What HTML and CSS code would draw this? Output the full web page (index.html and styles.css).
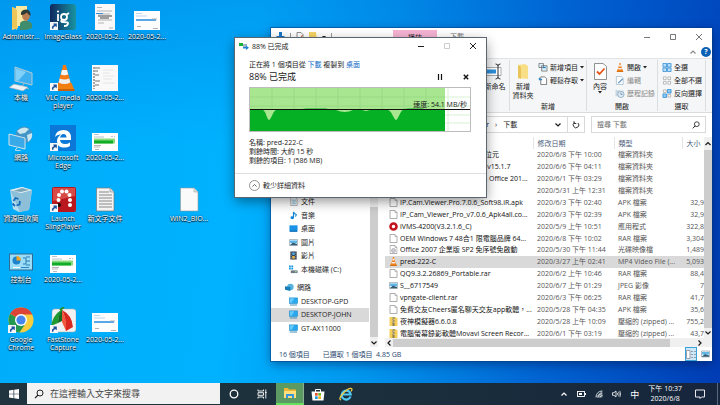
FILE: index.html
```html
<!DOCTYPE html>
<html lang="zh-Hant">
<head>
<meta charset="utf-8">
<title>桌面</title>
<link rel="stylesheet" href="styles.css">
</head>
<body>
<svg class="defs" aria-hidden="true">
  <symbol id="shortcut" viewBox="0 0 8 8"><rect width="8" height="8" fill="#f4f6f8"/><path d="M2 6.8C1.6 4.6 2.6 3.4 4 3.3L3.2 1.6H6.8V5.2L5.6 4.2C4 4.2 3.2 5 3.4 6.8Z" fill="#1c4f9c"/></symbol>
  <symbol id="cone" viewBox="0 0 20 26"><path d="M3 18H17L20 25H0Z" fill="#f08010"/><path d="M0 24H20V26H0Z" fill="#c9600c"/><path d="M8.6 0H11.4L16.5 19Q10 23 3.5 19Z" fill="#f47b16"/><path d="M7.5 5H12.5L13.7 9.5Q10 11 6.300 9.500Z" fill="#f5f5f5"/><path d="M5.200 13.500Q10 15.500 14.800 13.500L15.800 17.500Q10 20.500 4.200 17.500Z" fill="#eee"/></symbol>
  <symbol id="file" viewBox="0 0 8 9"><path d="M.5.5H5.500L7.500 2.500V8.500H.5Z" fill="#fff" stroke="#999" stroke-width=".8"/><path d="M5.500.5V2.500H7.500" fill="none" stroke="#999" stroke-width=".6"/></symbol>
  <symbol id="zip" viewBox="0 0 8 9"><path d="M0 0H5L8 1V9H0Z" fill="#f3cf5a"/><path d="M3 0H5V9H3Z" fill="#8a7b4c"/><path d="M3 1H4M4 2.500H5M3 4H4M4 5.500H5" stroke="#fff" stroke-width=".8"/></symbol>
  <symbol id="photo" viewBox="0 0 9 8"><path d="M.5 1H8.500V7H.5Z" fill="#eaf5fc" stroke="#8a969e" stroke-width=".6"/><path d="M1 2H8V4.500H1Z" fill="#5db8e8"/><path d="M1 6.500L4 4L8 5.500V6.700H1Z" fill="#355d76"/></symbol>
  <symbol id="monitor" viewBox="0 0 10 9"><rect x=".5" y=".5" width="9" height="6.200" fill="#28a8ee" stroke="#1684c4" stroke-width=".6"/><path d="M1 1H6L3 6H1Z" fill="#65c9fa"/><path d="M1 8.400H9" stroke="#3682ab"/></symbol>
  <symbol id="close" viewBox="0 0 8 8"><path d="M1 1L7 7M7 1L1 7" stroke="currentColor" fill="none"/></symbol>
  <symbol id="min" viewBox="0 0 8 8"><path d="M1 4.500H7" stroke="currentColor"/></symbol>
  <symbol id="max" viewBox="0 0 8 8"><path d="M1.500 1.500H6.500V6.500H1.500Z" stroke="currentColor" fill="none"/></symbol>
  <symbol id="up" viewBox="0 0 8 8"><path d="M1.500 5.500L4 3L6.500 5.500" stroke="currentColor" stroke-width="1.200" fill="none"/></symbol>
  <symbol id="down" viewBox="0 0 8 8"><path d="M1.500 2.500L4 5L6.500 2.500" stroke="currentColor" stroke-width="1.200" fill="none"/></symbol>
  <symbol id="left" viewBox="0 0 8 8"><path d="M5.500 1.500L3 4L5.500 6.500" stroke="currentColor" stroke-width="1.200" fill="none"/></symbol>
  <symbol id="right" viewBox="0 0 8 8"><path d="M2.500 1.500L5 4L2.500 6.500" stroke="currentColor" stroke-width="1.200" fill="none"/></symbol>
  <symbol id="caret" viewBox="0 0 4 4"><path d="M0 1H4L2 3.400Z" fill="#222"/></symbol>
  <symbol id="lens" viewBox="0 0 10 10"><circle cx="6" cy="4" r="3" stroke="currentColor" fill="none"/><path d="M4 6L1 9.200" stroke="currentColor" stroke-width="1.200"/></symbol>
  <symbol id="shotgreen" viewBox="0 0 26 18"><rect width="26" height="18" fill="#fff"/><path d="M2 1.500H7M2 4H12M19 3.500H21M22 3.500H23" stroke="#9ab" stroke-width=".7"/><rect x="2" y="5.500" width="21" height="5" fill="#8bdc80"/><path d="M2 7.500H21V10.500H2Z" fill="#12ad28"/><path d="M2 12.500H9M2 14H8M3 16.500H7" stroke="#888" stroke-width=".6"/></symbol>
  <symbol id="shotblue" viewBox="0 0 26 19"><rect width="26" height="19" fill="#fdfdfd"/><path d="M2 2.500H8M2 5H13" stroke="#9cc4e8" stroke-width=".7"/><rect x="2" y="8" width="20" height="2" fill="#5aa7e8"/><path d="M18 8H23M3 15.500H7M19 17.500H24" stroke="#aaa" stroke-width=".9"/></symbol>
</svg>

<main class="desktop">
  <div class="icons">
    <a class="item" href="#"><svg viewBox="0 0 26 26"><path d="M4 3L10 5V24L4 26Z" fill="#f7d774"/><path d="M8 2H19V22H8Z" fill="#fbe8a0"/><path d="M4 3L9 6V26L4 23Z" fill="#edc65a"/><path d="M12 26V20Q12 17 17 16.500Q23 17 24 20V24Q18 27 12 26Z" fill="#3f8d6c"/><path d="M14 10Q14 6 18 6Q22 6 22 10.500Q22 16 18 17Q14 16 14 10Z" fill="#bb7d52"/><path d="M13 11Q12 6 18 5.500Q23 6 22.500 12Q20 10 19 8.500Q16 11 13 11Z" fill="#2e3a35"/></svg><span>Administr...</span></a>
    <a class="item" href="#"><svg viewBox="0 0 26 26"><defs><linearGradient id="ig" x2="1"><stop stop-color="#10285e"/><stop offset="1" stop-color="#1894a2"/></linearGradient></defs><rect width="26" height="26" rx="3" fill="url(#ig)"/><g stroke="#fff" fill="none" stroke-width="1.800"><path d="M8 10V17"/><circle cx="14" cy="13" r="3"/><path d="M16 11L19 9M12 16Q10 18 13 18Q18 18 18 19Q18 22 14 22"/></g><circle cx="8" cy="7.500" r="1.100" fill="#fff"/><use href="#shortcut" y="18" width="8" height="8"/></svg><span>ImageGlass</span></a>
    <a class="item" href="#"><svg viewBox="0 0 26 26"><rect x="3" width="20" height="26" fill="#f8f8f8"/><path d="M5 3.500H10M5 7H20M6 10H18M6 16H20M6 19H12M17 24H21" stroke="#999" stroke-width=".7"/><path d="M4 9.500H11" stroke="#3b8fd8"/><path d="M6 12H20M8 14H17" stroke="#444"/></svg><span>2020-05-2...</span></a>
    <a class="item" href="#"><svg viewBox="0 0 26 26"><use href="#shotblue" y="7" width="26" height="19"/></svg><span>2020-05-2...</span></a>

    <a class="item first" href="#"><svg viewBox="0 0 26 26"><path d="M7 2L24 8V20L7 16Z" fill="#3fb0ef" stroke="#b6cbd6"/><path d="M8 3.500L18 7L10 16L8 15.500Z" fill="#80d0f8"/><path d="M16 18L14 22L21 24" fill="none" stroke="#aab8c0"/><path d="M6 19L20 22L15 26L1 22.500Z" fill="#edf2f5" stroke="#93a4ad" stroke-width=".6"/></svg><span>本機</span></a>
    <a class="item" href="#"><svg viewBox="0 0 26 26"><use href="#cone" x="4" width="21" height="26"/><use href="#shortcut" y="18" width="8" height="8"/></svg><span>VLC media player</span></a>
    <a class="item" href="#"><svg viewBox="0 0 26 26"><rect y="0" width="26" height="26" fill="#f9f9f9"/><path d="M2 2V24" stroke="#555" stroke-dasharray="2 1"/><path d="M3 3H8M3 6H6M3 10H7M3 16H8M3 20H7" stroke="#777"/><path d="M11 5H21M11 8H18M11 11H22M11 14H20M11 18H23" stroke="#ddd" stroke-width=".7"/></svg><span>2020-05-2...</span></a>

    <a class="item first" href="#"><svg viewBox="0 0 26 26"><circle cx="16" cy="10" r="8.500" fill="#4195c7"/><path d="M9 6Q15 0 21 4L17 8L12 9ZM19 10L24 8Q25 14 20 17Z" fill="#cae6ef"/><path d="M1 9L17 13V24L1 20Z" fill="#39a9e8" stroke="#d5e2e8"/><path d="M9 23L7 25L13 26" stroke="#d3dde2" fill="none"/></svg><span>網路</span></a>
    <a class="item" href="#"><svg viewBox="0 0 26 26"><rect width="26" height="26" fill="#0b78d7"/><path d="M5 12Q6 5 13.500 5Q21 5 21 13V15H10Q10.500 19 15 19Q18 19 20 17.500V21Q17 23 13 22.500Q7 22 7 16Q7 12 11 9.500Q7 9 5 12ZM10 12.500H16.500Q16.500 9 13.500 9Q10.800 9 10 12.500Z" fill="#fff" fill-rule="evenodd"/><use href="#shortcut" y="18" width="8" height="8"/></svg><span>Microsoft Edge</span></a>
    <a class="item" href="#"><svg viewBox="0 0 26 26"><use href="#shotgreen" y="8" width="26" height="18"/></svg><span>2020-05-2...</span></a>

    <a class="item first" href="#"><svg viewBox="0 0 26 26"><path d="M2 4L14 1L24 4L21 24L11 26L5 23Z" fill="#b5dced"/><path d="M2 4L13 7L24 4L21 24L12 26Z" fill="#8dc0d8"/><path d="M2 4L14 1L24 4L13 7Z" fill="#e1eef3"/><path d="M5 5L14 2L21 4L13 6Z" fill="#7ba6b9"/><path d="M5.500 15L7.500 12L10.500 13M12 15L11.500 18.500L8.500 19.500M7 20L4.500 17.500" stroke="#146bb9" stroke-width="1.800" fill="none"/></svg><span>資源回收筒</span></a>
    <a class="item" href="#"><svg viewBox="0 0 26 26"><rect x="2" y="1" width="24" height="25" rx="2" fill="#b9181f"/><path d="M3 2H25V10L3 15Z" fill="#d84a45"/><g fill="#fff"><circle cx="12" cy="5.500" r="2"/><circle cx="16.500" cy="5.500" r="2"/><circle cx="9" cy="9" r="2"/><circle cx="19.500" cy="9" r="2"/><circle cx="8.500" cy="14" r="2"/><circle cx="20" cy="14" r="2"/><circle cx="20" cy="19" r="2"/></g><circle cx="9" cy="19" r="2" fill="#220b0b"/><use href="#shortcut" y="18" width="8" height="8"/></svg><span>Launch SlingPlayer</span></a>
    <a class="item" href="#"><svg viewBox="0 0 26 26"><path d="M4.500 2H18L22 6V25H4.500Z" fill="#f3f3f3" stroke="#777" stroke-width=".7"/><path d="M18 2V6H22" fill="#ddd" stroke="#777" stroke-width=".5"/><path d="M7 6H17M7 9H20M7 12H20M7 15H20M7 18H20M7 21H20" stroke="#888"/></svg><span>新文字文件</span></a>
    <a class="item col5" href="#"><svg viewBox="0 0 26 26"><path d="M4.500 2H18L22 6V25H4.500Z" fill="#fafafa" stroke="#999" stroke-width=".6"/><path d="M18 2V6H22" fill="#ddd" stroke="#999" stroke-width=".5"/></svg><span>WIN2_BIO...</span></a>

    <a class="item first" href="#"><svg viewBox="0 0 26 26"><rect x="1.500" y="7" width="23" height="16" fill="#9bdcf8" stroke="#326b92"/><circle cx="8.500" cy="13.500" r="4" fill="#1d83cc"/><path d="M8.500 13.500V9A4.500 4.500 0 0 1 13 13.500Z" fill="#f6a623"/><path d="M15 11H18V17H15M18 10H22M18 14H22M18 18H22" stroke="#267db5" fill="none"/><path d="M5 20.500H12" stroke="#fff"/><path d="M13 20.500H21" stroke="#2c86bf"/></svg><span>控制台</span></a>
    <a class="item" href="#"><svg viewBox="0 0 26 26"><use href="#shotgreen" y="8" width="26" height="18"/></svg><span>2020-05-2...</span></a>

    <a class="item first" href="#"><svg viewBox="0 0 26 26"><circle cx="13" cy="13" r="12.500" fill="#f9ce3e"/><path d="M13 13L2.200 6.800A12.500 12.500 0 0 0 11.500 25.400L18 16Z" fill="#24994f"/><path d="M13 13L2.200 6.800A12.500 12.500 0 0 1 24.300 7.500H13Z" fill="#dc4437"/><circle cx="13" cy="13" r="6" fill="#fff"/><circle cx="13" cy="13" r="4.600" fill="#4787ed"/><use href="#shortcut" y="18" width="8" height="8"/></svg><span>Google Chrome</span></a>
    <a class="item" href="#"><svg viewBox="0 0 26 26"><rect x="2" y="2" width="24" height="23" rx="3" fill="#f2f2f2" stroke="#aaa" stroke-width=".5"/><path d="M11 3Q3 8 1 19L8 16Q8 8 13 3Z" fill="#1f9b32"/><path d="M8 16Q8 8 12 3L12 14Z" fill="#146a22"/><path d="M12 3Q22 8 23 20L16 24Q16 10 12 3Z" fill="#d8281f"/><path d="M12 3Q17 12 16 24L12 15Z" fill="#f0593e"/><path d="M10 3L14 0" stroke="#1b8f2d" stroke-width="2"/><use href="#shortcut" y="18" width="8" height="8"/></svg><span>FastStone Capture</span></a>
    <a class="item" href="#"><svg viewBox="0 0 26 26"><use href="#shotblue" y="6" width="26" height="19"/></svg><span>2020-05-2...</span></a>
  </div>

  <section class="explorer" aria-label="下載">
    <header class="ex-title">
      <div class="quick">
        <svg width="9" height="10" viewBox="0 0 9 10"><path d="M3 0H6V4H9L4.500 9L0 4H3Z" fill="#1976c8"/></svg><i></i>
        <svg width="8" height="9" viewBox="0 0 8 9"><path d="M1 .5H5L7 2.500V8.500H1Z" fill="#fff" stroke="#777" stroke-width=".8"/><path d="M2.500 5L4 6.500L6.500 3" fill="none" stroke="#d85a25"/></svg>
        <svg width="8" height="9" viewBox="0 0 8 9"><path d="M0 0H7L8 9H0Z" fill="#f5d468"/></svg>
        <svg width="4" height="4"><use href="#caret"/></svg><i></i>
      </div>
      <span class="context-tab">播放</span>
      <span class="ex-name">下載</span>
      <div class="winbtns light">
        <button aria-label="最小化"><svg><use href="#min"/></svg></button>
        <button aria-label="最大化"><svg><use href="#max"/></svg></button>
        <button aria-label="關閉"><svg><use href="#close"/></svg></button>
      </div>
    </header>
    <div class="tabs"><svg class="s8 gray"><use href="#up"/></svg><span class="help">?</span></div>
    <div class="ribbon">
      <div class="group rename">
        <button class="big"><svg width="16" height="17" viewBox="0 0 16 17"><path d="M0 4.500H14V12.500H0" fill="#fff" stroke="#999" stroke-width=".8"/><rect y="6.500" width="9" height="4" fill="#2e91dc"/><path d="M8.500 1Q11 1 11 3V14Q11 16 8.500 16M13.500 1Q11 1 11 3M11 14Q11 16 13.500 16" fill="none" stroke="#333"/></svg><span>新命名</span></button>
        <span class="gname"></span>
      </div>
      <div class="group new">
        <div class="tools">
          <button class="big"><svg width="12" height="17" viewBox="0 0 12 17"><path d="M1 2L8 1L11 3V16L1 15Z" fill="#f8df87"/><path d="M1 2L4 4V16L1 15Z" fill="#e9c45a"/></svg><span>新增<br>資料夾</span></button>
          <div class="stack">
            <button><svg class="ic" viewBox="0 0 10 10"><path d="M.5.5H5.500V5H.5ZM3.500 3H9.500V9H3.500Z" fill="#dceef8" stroke="#555" stroke-width=".7"/><path d="M5 5H8" stroke="#2583c8" stroke-width="1.500"/></svg>新增項目<svg class="car"><use href="#caret"/></svg></button>
            <button><svg class="ic" viewBox="0 0 10 10"><path d="M2.500 1H7L9 3V9.500H2.500Z" fill="#fff" stroke="#555" stroke-width=".8"/><path d="M4 4H1V2" fill="none" stroke="#2583c8" stroke-width="1.300"/></svg>輕鬆存取<svg class="car"><use href="#caret"/></svg></button>
          </div>
        </div>
        <span class="gname">新增</span>
      </div>
      <div class="group open">
        <div class="tools">
          <button class="big"><svg width="13" height="17" viewBox="0 0 13 17"><path d="M.5.5H9L12.500 3.500V16.500H.5Z" fill="#fff" stroke="#777" stroke-width=".8"/><path d="M3 8.500L5.500 11L10.500 5.500" fill="none" stroke="#e85314" stroke-width="1.800"/></svg><span>內容</span><svg class="car"><use href="#caret"/></svg></button>
          <div class="stack">
            <button><svg class="ic" viewBox="0 0 20 26"><use href="#cone" width="20" height="26"/></svg>開啟<svg class="car"><use href="#caret"/></svg></button>
            <button disabled><svg class="ic" viewBox="0 0 10 10"><path d="M1 .5H6.500L8.500 2.500V9.500H1Z" fill="#fff" stroke="#9ab5cc" stroke-width=".8"/><path d="M3 8L8 3" stroke="#6d9fca" stroke-width="1.400"/></svg>編輯</button>
            <button disabled><svg class="ic" viewBox="0 0 10 10"><path d="M0 1H4L5 2H9V8H0Z" fill="#c7d6e2"/><circle cx="6" cy="6" r="3.500" fill="#dfebf4" stroke="#7f9fba" stroke-width=".8"/><path d="M6 4V6H8" stroke="#587fa0" fill="none" stroke-width=".8"/></svg>歷程記錄</button>
          </div>
        </div>
        <span class="gname">開啟</span>
      </div>
      <div class="group select">
        <div class="tools">
          <div class="stack">
            <button><svg class="ic" viewBox="0 0 10 10"><path d="M.5.5H4.500V4.500H.5ZM5.500.5H9.500V4.500H5.500ZM.5 5.500H4.500V9.500H.5ZM5.500 5.500H9.500V9.500H5.500Z" fill="#b9defa" stroke="#2186d2" stroke-width=".8"/></svg>全選</button>
            <button><svg class="ic" viewBox="0 0 10 10"><path d="M1 1H4V4H1ZM6 1H9V4H6ZM1 6H4V9H1ZM6 6H9V9H6Z" fill="#fff" stroke="#999" stroke-width=".7"/></svg>全部不選</button>
            <button><svg class="ic" viewBox="0 0 10 10"><path d="M1 1H4V4H1ZM6 6H9V9H6Z" fill="#fff" stroke="#999" stroke-width=".7"/><path d="M5.500.5H9.500V4.500H5.500ZM.5 5.500H4.500V9.500H.5Z" fill="#8ac8f5" stroke="#2186d2" stroke-width=".8"/></svg>反向選擇</button>
          </div>
        </div>
        <span class="gname">選取</span>
      </div>
    </div>
    <div class="addr">
      <div class="crumbs"><span class="path">or<b>›</b>下載</span><svg class="s8"><use href="#down"/></svg><button aria-label="重新整理"><svg width="8" height="8" viewBox="0 0 8 8"><path d="M6 2A2.800 2.800 0 1 1 2.500 1.600M2 .2V2.500H4.300" fill="none" stroke="#333"/></svg></button></div>
      <label class="find"><input type="search" placeholder="搜尋 下載" aria-label="搜尋 下載"><svg width="8" height="8"><use href="#lens"/></svg></label>
    </div>
    <div class="panes">
      <nav class="tree">
        <div class="branches">
          <div class="branch pc">
            <a href="#"><svg viewBox="0 0 10 9"><path d="M2 0H7L9 2V9H2Z" fill="#fff" stroke="#888" stroke-width=".7"/><path d="M3.500 3H7.500M3.500 5H7.500M3.500 7H7.500" stroke="#4c9dcc" stroke-width=".8"/></svg>文件</a>
            <a href="#"><svg viewBox="0 0 10 9"><path d="M5 7V.5Q6 2.500 8 3.500Q8 5 7 5.500" fill="none" stroke="#1383d4" stroke-width="1.300"/><ellipse cx="3.600" cy="7" rx="2" ry="1.600" fill="#1383d4"/></svg>音樂</a>
            <a href="#"><svg viewBox="0 0 10 9"><rect x=".5" y="1" width="9" height="7" fill="#1891e6"/><path d="M1 7.500H9" stroke="#0a5a9c"/></svg>桌面</a>
            <a href="#"><svg viewBox="0 0 9 8"><use href="#photo"/></svg>圖片</a>
            <a href="#"><svg viewBox="0 0 10 9"><rect x="1.500" width="7" height="9" fill="#2c3948"/><path d="M3.500 1H6.500V4H3.500Z" fill="#4aa3e2"/><path d="M3.500 5H6.500V8H3.500Z" fill="#e7b34a"/><path d="M2.400 0V9M7.600 0V9" stroke="#d5dbe0" stroke-width=".7" stroke-dasharray="1"/></svg>影片</a>
            <a href="#"><svg viewBox="0 0 10 9"><path d="M0 0H2V2H0ZM2.600 0H4.600V2H2.600ZM0 2.600H2V4.600H0ZM2.600 2.600H4.600V4.600H2.600Z" fill="#1698e0"/><path d="M2 5.500H9.500V8.500H2Z" fill="#6c7780"/><path d="M6.500 7H8.500" stroke="#aef5a0"/></svg>本機磁碟 (C:)</a>
          </div>
          <div class="branch net">
            <a class="root" href="#"><svg viewBox="0 0 10 9"><circle cx="6" cy="4" r="3.600" fill="#58b4df"/><path d="M0 3L6 4V8.500L0 7Z" fill="#1a7db7"/></svg>網路</a>
            <a href="#"><svg><use href="#monitor"/></svg>DESKTOP-GPD</a>
            <a class="on" href="#"><svg><use href="#monitor"/></svg>DESKTOP-JOHN</a>
            <a href="#"><svg><use href="#monitor"/></svg>GT-AX11000</a>
          </div>
        </div>
        <div class="vbar"><i></i><svg class="s8"><use href="#down"/></svg></div>
      </nav>
      <div class="list">
        <div class="rows">
          <table>
            <thead><tr><th class="n"></th><th class="d">修改日期</th><th class="t">類型</th><th class="z">大小</th></tr></thead>
            <tbody>
              <tr><td class="peek">位元</td><td>2020/6/8 下午 10:00</td><td>檔案資料夾</td><td></td></tr>
              <tr><td class="peek">-v15.1.7</td><td>2020/6/6 下午 04:11</td><td>檔案資料夾</td><td></td></tr>
              <tr><td class="peek">- Office 201...</td><td>2020/6/1 下午 03:29</td><td>檔案資料夾</td><td></td></tr>
              <tr><td></td><td>2020/5/31 上午 12:31</td><td>檔案資料夾</td><td></td></tr>
              <tr><td><svg><use href="#file"/></svg>IP.Cam.Viewer.Pro.7.0.6_Soft98.iR.apk</td><td>2020/6/3 下午 02:40</td><td>APK 檔案</td><td>32,9</td></tr>
              <tr><td><svg><use href="#file"/></svg>IP_Cam_Viewer_Pro_v7.0.6_Apk4all.co...</td><td>2020/6/3 下午 02:39</td><td>APK 檔案</td><td>32,9</td></tr>
              <tr><td><svg viewBox="0 0 9 9"><circle cx="4.500" cy="4.500" r="3" fill="#fff" stroke="#c3141e" stroke-width="2.600"/></svg>iVMS-4200(V3.2.1.6_C)</td><td>2020/5/9 上午 10:51</td><td>應用程式</td><td>322,8</td></tr>
              <tr><td><svg><use href="#file"/></svg>OEM Windows 7 48合1 限電腦品牌 64...</td><td>2020/6/8 下午 10:02</td><td>RAR 檔案</td><td>3,304</td></tr>
              <tr><td><svg viewBox="0 0 8 9"><use href="#file"/><circle cx="4" cy="5.500" r="2" fill="#ccd" stroke="#999" stroke-width=".6"/></svg>Office 2007 企業版 SP2 免序號免啟動</td><td>2020/5/30 下午 11:44</td><td>光碟映像檔</td><td>1,489</td></tr>
              <tr class="on"><td><svg viewBox="0 0 20 26"><use href="#cone" width="20" height="26"/></svg>pred-222-C</td><td>2020/3/27 上午 02:41</td><td>MP4 Video File (...</td><td>5,093</td></tr>
              <tr><td><svg><use href="#file"/></svg>QQ9.3.2.26869_Portable.rar</td><td>2020/6/2 上午 10:46</td><td>RAR 檔案</td><td>88,4</td></tr>
              <tr><td><svg><use href="#photo"/></svg>S__6717549</td><td>2020/6/7 上午 01:29</td><td>JPEG 影像</td><td>7</td></tr>
              <tr><td><svg><use href="#file"/></svg>vpngate-client.rar</td><td>2020/6/3 下午 06:25</td><td>RAR 檔案</td><td>41,7</td></tr>
              <tr><td><svg><use href="#file"/></svg>免費交友Cheers匿名聊天交友app軟體，...</td><td>2020/5/28 下午 04:35</td><td>APK 檔案</td><td>35,6</td></tr>
              <tr><td><svg><use href="#zip"/></svg>夜神模擬器6.6.0.8</td><td>2020/5/28 上午 10:09</td><td>壓縮的 (zipped) ...</td><td>755,2</td></tr>
              <tr><td><svg><use href="#zip"/></svg>電腦螢幕錄影軟體Movavi Screen Recor...</td><td>2020/6/1 下午 03:19</td><td>壓縮的 (zipped) ...</td><td>43,7</td></tr>
            </tbody>
          </table>
          <div class="vbar files"><svg class="s8"><use href="#up"/></svg><i></i><svg class="s8"><use href="#down"/></svg></div>
        </div>
        <div class="hbar"><svg class="s8"><use href="#left"/></svg><i></i><svg class="s8"><use href="#right"/></svg></div>
      </div>
    </div>
    <footer class="status"><span>16 個項目</span><span>已選取 1 個項目&nbsp; 4.85 GB</span>
      <div class="views"><button class="on" aria-label="詳細資料"><svg width="10" height="9" viewBox="0 0 10 9"><path d="M.5.5H4V8.500H.5ZM5 1.500H7M5 4.500H7M5 7.500H7M8 1.500H10M8 4.500H10M8 7.500H10" fill="#fff" stroke="#889" stroke-width=".8"/></svg></button><button aria-label="縮圖"><svg width="9" height="8"><use href="#photo"/></svg></button></div>
    </footer>
  </section>

  <section class="dialog" aria-label="88% 已完成">
    <header class="dl-title"><svg width="10" height="8" viewBox="0 0 10 8"><path d="M0 1H4V4H0Z" fill="#18b13a"/><path d="M4 2H8V6H4Z" fill="#9cb5c7"/><path d="M4 5H7V3.500L10 5.800L7 8V6.600H4Z" fill="#1c82d6"/></svg><span>88% 已完成</span>
      <div class="winbtns">
        <button aria-label="最小化"><svg><use href="#min"/></svg></button>
        <button aria-label="最大化" disabled><svg><use href="#max"/></svg></button>
        <button aria-label="關閉"><svg><use href="#close"/></svg></button>
      </div>
    </header>
    <div class="dl-body">
      <p>正在將 1 個項目從 <a href="#">下載</a> 複製到 <a href="#">桌面</a></p>
      <div class="headline"><strong>88% 已完成</strong>
        <button aria-label="暫停"><svg width="6" height="6" viewBox="0 0 6 6"><path d="M1.500 0V6M4.500 0V6" stroke="#111" stroke-width="1.200"/></svg></button>
        <button aria-label="取消"><svg width="6" height="6" viewBox="0 0 6 6"><path d="M.8.8L5.200 5.200M5.200.8L.8 5.200" stroke="#111" stroke-width="1.400"/></svg></button>
      </div>
      <div class="chart">
        <svg viewBox="0 0 220 43" preserveAspectRatio="none">
          <path d="M22 0V43M44 0V43M66 0V43M88 0V43M110 0V43M132 0V43M154 0V43M176 0V43M198 0V43M0 9H220M0 18H220M0 27H220M0 35H220" stroke="#d8f3d1" stroke-width="1"/>
          <rect width="195" height="43" fill="#a8e690"/>
          <path d="M22 0V22M44 0V22M66 0V22M88 0V22M110 0V22M132 0V22M154 0V22M176 0V22M0 9H195M0 18H195" stroke="#98da84" stroke-width="1"/>
          <path d="M0 22H13C16 23 17 32 19 32S23 23 26 22H46L56 20.500H76L82 22H86Q95 26 103 22H112L116 23L120 22H138C142 23 144 32 146 32S150 23 154 21L158 20.500H172L180 22H195V43H0Z" fill="#06b025"/>
          <path d="M0 21.500H220" stroke="#111"/>
        </svg>
        <span class="speed">速度: 54.1 MB/秒</span>
      </div>
      <p class="detail">名稱: pred-222-C<br>剩餘時間: 大約 15 秒<br>剩餘的項目: 1 (586 MB)</p>
    </div>
    <footer class="dl-foot"><button><svg width="11" height="11" viewBox="0 0 11 11"><circle cx="5.500" cy="5.500" r="5" fill="#fff" stroke="#777" stroke-width=".8"/><path d="M3.500 6.500L5.500 4.500L7.500 6.500" fill="none" stroke="#444" stroke-width=".8"/></svg>較少詳細資料</button></footer>
  </section>
</main>

<footer class="taskbar">
  <button class="start" aria-label="開始"><svg width="10" height="10" viewBox="0 0 10 10"><path d="M0 1.400L4.500.8V4.700H0ZM5.200.7L10 0V4.700H5.200ZM0 5.300H4.500V9.200L0 8.600ZM5.200 5.300H10V10L5.200 9.300Z" fill="#fff"/></svg></button>
  <label class="tsearch"><svg width="10" height="10"><use href="#lens"/></svg><input type="text" placeholder="在這裡輸入文字來搜尋" aria-label="在這裡輸入文字來搜尋"></label>
  <button class="app" aria-label="Cortana"><svg width="10" height="10" viewBox="0 0 10 10"><circle cx="5" cy="5" r="3.800" fill="none" stroke="#fff" stroke-width="1.300"/></svg></button>
  <button class="app" aria-label="工作檢視"><svg width="10" height="10" viewBox="0 0 10 10"><path d="M1 .5V2H6.500V.5M1 9.500V8H6.500V9.500M1 3.700H6.500V6.300H1ZM8.800.5V9.500M8 3.500H9.600" fill="none" stroke="#fff" stroke-width=".9"/></svg></button>
  <button class="app active" aria-label="檔案總管"><svg width="14" height="12" viewBox="0 0 14 12"><path d="M1 1H5L6 2.500H13V11H1Z" fill="#f2b632"/><path d="M1 4H13V11H1Z" fill="#ffe07c"/><path d="M3 11V7H11V11H9V9H5V11Z" fill="#3994df"/></svg></button>
  <button class="app" aria-label="Store"><svg width="14" height="13" viewBox="0 0 14 13"><path d="M4.500 4V1.500H9.500V4" fill="none" stroke="#fff"/><path d="M.5 3.500H13.500L12.500 12.500H1.500Z" fill="#fff"/><path d="M4 5H6.700V7.700H4Z" fill="#e9532b"/><path d="M7.300 5H10V7.700H7.300Z" fill="#78b52b"/><path d="M4 8.300H6.700V11H4Z" fill="#2199dd"/><path d="M7.300 8.300H10V11H7.300Z" fill="#f3b31c"/></svg></button>
  <button class="app" aria-label="Internet Explorer"><svg width="14" height="14" viewBox="0 0 14 14"><path d="M11.500 9.500A4.500 4.500 0 1 1 11.700 7.500H4" fill="none" stroke="#50c8f4" stroke-width="2.200"/><path d="M2 13Q-1 12 4 6.500Q9 1 12 1.300Q14 1.500 12 4.500" fill="none" stroke="#f5cd45" stroke-width="1.200"/></svg></button>
  <div class="tray">
    <svg class="s8"><use href="#up"/></svg>
    <svg width="9" height="8" viewBox="0 0 9 8"><rect x=".5" y="1.500" width="7" height="5" fill="none" stroke="#fff" stroke-width=".9"/><path d="M2 3H5V5H2ZM8 3H9V5H8Z" fill="#fff"/></svg>
    <svg width="8" height="8" viewBox="0 0 8 8"><path d="M0 7.500L7.500 0V7.500Z" fill="#73808a"/><path d="M1 7A6 6 0 0 1 7 1M3 7.500A4 4 0 0 1 7 3.500M5 7.500A2.500 2.500 0 0 1 7.500 5.500" fill="none" stroke="#e8edf0" stroke-width=".8"/></svg>
    <svg width="9" height="8" viewBox="0 0 9 8"><path d="M.5 2.700H2L4 1V7L2 5.300H.5Z" fill="none" stroke="#fff" stroke-width=".8"/><path d="M5.200 2.800Q6 4 5.200 5.200M6.500 1.700Q8 4 6.500 6.300M7.800.8Q9.500 4 7.800 7.200" fill="none" stroke="#fff" stroke-width=".7"/></svg>
    <span class="ime">中</span>
    <time>下午 10:37<br>2020/6/8</time>
    <svg class="note" width="10" height="10" viewBox="0 0 10 10"><path d="M.5 1H9.500V8H6.500L5 9.500V8H.5Z" fill="none" stroke="#fff" stroke-width=".9"/></svg>
  </div>
</footer>
</body>
</html>
```
FILE: styles.css
```css
* { box-sizing: border-box; }
body {
  margin: 0;
  height: 100vh;
  display: flex;
  flex-direction: column;
  overflow: hidden;
  font: 7px/9px "Open Sans", "Noto Sans CJK TC", sans-serif;
  color: #1a1a1a;
}
button, input { font: inherit; color: inherit; border: 0; background: none; padding: 0; margin: 0; }
a { color: inherit; text-decoration: none; }
p { margin: 0; }
svg { display: block; flex: none; }
.defs { position: absolute; width: 0; height: 0; }
.s8 { width: 8px; height: 8px; }
.gray { color: #888; }

.desktop {
  position: relative;
  flex: 1;
  min-height: 0;
  background:
    linear-gradient(to bottom, rgba(0, 80, 200, .22), rgba(0, 100, 210, 0) 38%),
    linear-gradient(97deg, #00acfa 0%, #00b2ff 34%, #0098ef 52%, #0064d2 76%, #003cb4 100%);
}
.icons {
  display: grid;
  grid-template-columns: repeat(5, 42px);
  grid-template-rows: repeat(6, 1fr);
  height: 95%;
}
.item {
  display: flex;
  flex-direction: column;
  align-items: center;
  gap: 3px;
  padding-top: 4px;
  line-height: 8px;
  text-align: center;
  color: #fff;
  text-shadow: 0 1px 1px #000, 0 0 2px #024;
}
.item svg { width: 26px; height: 26px; }
.item span { width: 41px; }
.first { grid-column: 1; }
.col5 { grid-column: 5; }

.winbtns { display: flex; margin-left: auto; color: #222; }
.winbtns button { width: 26px; display: grid; place-items: center; }
.winbtns svg { width: 8px; height: 8px; }
.winbtns.light { color: #777; }
.winbtns button:disabled { color: #ccc; }

.explorer {
  position: absolute;
  top: 28px;
  right: 8px;
  bottom: 22px;
  left: 271px;
  display: flex;
  flex-direction: column;
  background: #fff;
  box-shadow: 0 0 0 1px rgba(0, 60, 130, .5), 0 3px 10px rgba(0, 10, 60, .45);
}
.ex-title { display: flex; height: 17px; align-items: center; }
.quick { display: flex; align-items: center; gap: 5px; width: 122px; padding-left: 5px; }
.quick i { width: 1px; height: 8px; background: #999; }
.context-tab { width: 44px; height: 15px; padding-top: 3px; align-self: flex-end; background: #f6b3d3; text-align: center; }
.ex-name { margin-left: 13px; color: #777; }
.tabs { display: flex; height: 13px; align-items: center; justify-content: flex-end; gap: 4px; padding-right: 1px; }
.help { width: 10px; height: 10px; border-radius: 50%; background: #0b62b5; color: #fff; font-weight: 700; line-height: 10px; text-align: center; }

.ribbon { display: flex; justify-content: flex-end; height: 55px; padding-right: 6px; background: #f5f6f7; border-top: 1px solid #e2e3e4; border-bottom: 1px solid #dadbdc; }
.group { display: flex; flex-direction: column; border-right: 1px solid #dcdddf; margin: 1px 0; }
.rename { width: 28px; }
.new { width: 77px; }
.open { width: 71px; }
.select { width: 48px; }
.tools { display: flex; flex: 1; gap: 2px; }
.gname { text-align: center; height: 9px; }
.big { display: flex; flex-direction: column; align-items: center; gap: 2px; width: 26px; padding-top: 3px; line-height: 9px; white-space: nowrap; }
.stack { display: flex; flex-direction: column; gap: 1px; padding-top: 1px; }
.stack button { display: flex; align-items: center; gap: 2px; height: 12px; white-space: nowrap; }
.stack button:disabled { color: #8a8a8a; }
.select .stack { padding-left: 4px; }
.ic { width: 10px; height: 9px; }
.car { width: 4px; height: 4px; }
.big .car { margin-top: -3px; }

.addr { display: flex; gap: 6px; height: 24px; padding: 3px 6px 4px; }
.crumbs { flex: 1; display: flex; align-items: center; justify-content: flex-end; border: 1px solid #d9d9d9; }
.path { width: 72px; }
.path b { margin: 0 6px; font-weight: 400; }
.crumbs button { width: 17px; height: 100%; margin-left: 5px; border-left: 1px solid #d9d9d9; display: grid; place-items: center; }
.find { width: 115px; display: flex; align-items: center; padding: 0 5px; border: 1px solid #d9d9d9; }
.find input { flex: 1; min-width: 0; }
input::placeholder { color: #6d6d6d; opacity: 1; }

.panes { flex: 1; min-height: 0; display: flex; }
.tree { width: 107px; display: flex; overflow: hidden; }
.branches { flex: 1; display: flex; flex-direction: column; justify-content: flex-end; padding-bottom: 12px; gap: 5px; }
.branch { display: grid; grid-auto-rows: 1fr; }
.pc { height: 81px; }
.net { height: 54px; }
.branch a { display: flex; align-items: center; gap: 3px; padding-left: 18px; white-space: nowrap; }
.branch .root { padding-left: 14px; }
.branch svg { width: 9px; height: 9px; }
.branch .on { background: #d9d9d9; }
.vbar { width: 8px; display: flex; flex-direction: column; align-items: center; background: #f0f0f0; margin-left: 1px; }
.vbar i { flex: 1; align-self: stretch; background: #cdcdcd; }
.tree .vbar i { margin: 70px 0 2px; }
.list { flex: 1; min-width: 0; display: flex; flex-direction: column; padding-left: 7px; }
.rows { flex: 1; min-height: 0; display: flex; }
.files { margin-left: 0; }
.files svg:first-child { height: 13px; }
.files svg { height: 10px; }
table { flex: 1; min-width: 0; height: 202px; table-layout: fixed; border-collapse: collapse; }
th, td { padding: 0 0 0 4px; font-weight: 400; text-align: left; white-space: nowrap; overflow: hidden; line-height: 9px; color: #555; }
th { color: #4c607a; height: 12px; }
th + th { border-left: 1px solid #e5e5e5; }
.n { width: 148px; }
.d { width: 81px; }
.t { width: 68px; }
td:first-child { color: #111; }
td:last-child { text-align: right; padding: 0; }
td svg { display: inline-block; width: 9px; height: 9px; margin-right: 2px; vertical-align: top; }
td.peek { padding-left: 100px; }
tbody .on { background: #d9d9d9; }
.hbar { display: flex; align-items: center; height: 9px; background: #f0f0f0; padding-right: 8px; }
.hbar i { width: 277px; height: 8px; background: #cdcdcd; margin-right: auto; }
.status { display: flex; align-items: center; height: 14px; gap: 13px; padding-left: 8px; color: #2b4a72; }
.views { display: flex; align-self: stretch; margin-left: auto; gap: 2px; padding-right: 1px; }
.views button { width: 12px; display: grid; place-items: center; }
.views .on { border: 1px solid #3ba3da; background: #cde9f8; }

.dialog {
  position: absolute;
  left: 235px;
  top: 38px;
  width: 251px;
  background: #fff;
  box-shadow: 0 0 0 1px #5b6670, 0 4px 12px rgba(0, 0, 0, .45);
}
.dl-title { display: flex; align-items: center; gap: 3px; height: 16px; padding-left: 4px; }
.dl-body { padding: 6px 15px 8px 14px; }
.dl-body a { color: #0b6ac6; }
.headline { display: flex; align-items: center; height: 15px; margin: 0 -8px 3px 0; }
.headline strong { flex: 1; font-size: 9px; font-weight: 400; line-height: 15px; }
.headline button { width: 26px; display: grid; place-items: center; }
.chart { position: relative; height: 45px; border: 1px solid #bcbcbc; }
.chart svg { width: 100%; height: 100%; }
.speed { position: absolute; right: 3px; top: 12px; }
.detail { margin-top: 6px; }
.dl-foot { border-top: 1px solid #dfdfdf; padding: 6px 14px; }
.dl-foot button { display: flex; align-items: center; gap: 3px; }

.taskbar { display: flex; height: 22px; background: linear-gradient(90deg, #1f343e, #1b303c 50%, #16253c); color: #fff; }
.taskbar button { display: grid; place-items: center; }
.start { width: 27px; }
.tsearch { width: 193px; margin-bottom: 1px; display: flex; align-items: center; gap: 6px; padding-left: 7px; background: #f2f2f2; color: #222; }
.tsearch input { flex: 1; min-width: 0; font-size: 9px; line-height: 12px; }
.tsearch input::placeholder { color: #444; }
.app { width: 28px; }
.app.active { background: #5b9a63; border-bottom: 2px solid #63e05c; border-right: 1px solid #8bb391; }
.tray { margin-left: auto; display: flex; align-items: center; gap: 9px; padding-right: 12px; border-right: 1px solid #59687a; margin-right: 2px; }
.ime { font-size: 9px; }
time { text-align: center; line-height: 10px; }
.note { margin-left: 4px; }
```
